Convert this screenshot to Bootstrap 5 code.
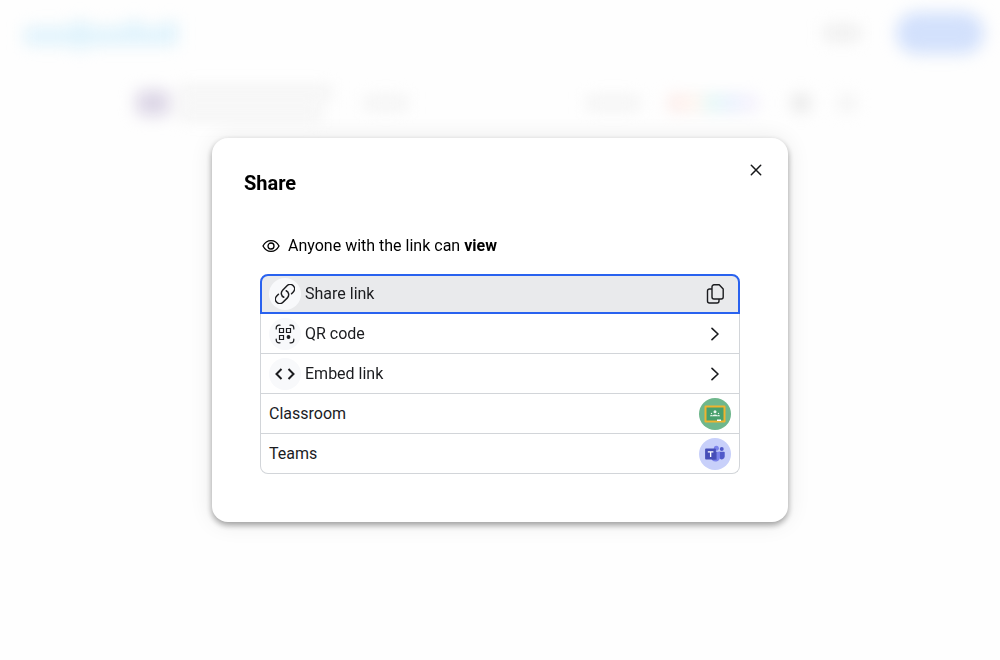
<!DOCTYPE html>
<html lang="en">
<head>
<meta charset="utf-8">
<meta name="viewport" content="width=device-width, initial-scale=1">
<title>Share</title>
<link href="https://cdn.jsdelivr.net/npm/bootstrap@5.3.0/dist/css/bootstrap.min.css" rel="stylesheet">
<style>
  body { font-family: Roboto, "Liberation Sans", sans-serif; font-size: 16px; background: #fefefe; color: #000; }
  svg { display: block; flex: none; }

  /* page behind the dialog, softened */
  .backdrop-page { filter: blur(8px); }
  .site-bar { height: 66px; padding: 0 16px 0 24px; }
  .site-logo { width: 154px; height: 34px; margin-top: 2px; }
  .site-tools { gap: 36px; }
  .login-bar { width: 36px; height: 14px; background: #ededed; }
  .signup-pill { width: 88px; height: 42px; background: #d3e1fc; border-radius: 21px; }
  .doc-bar { max-width: 728px; height: 74px; }
  .doc-tools { gap: 28px; padding-right: 8px; }
  .doc-thumb { width: 34px; height: 26px; background: #dcd6e6; border-radius: 8px; }
  .line-bar { height: 12px; background: #f2f2f2; }
  .dot { width: 18px; height: 18px; border-radius: 50%; }

  .overlay { z-index: 10; }
  .share-dialog { max-width: 576px; padding: 28px 32px 48px; border-radius: 16px; background: #fff;
    box-shadow: 0 3px 6px rgba(0,0,0,.36), 0 1px 24px rgba(0,0,0,.09); }
  .share-title { font-size: 20px; line-height: 34px; font-weight: 700; }
  .close-btn { top: 16px; right: 16px; width: 32px; height: 32px; }
  .share-body { padding: 0 16px; margin-top: 34px; }
  .view-note { line-height: 24px; margin-bottom: 16px; padding-left: 2px; }
  .share-item { height: 40px; padding: 4px 8px 3px; border: 1px solid #d2d5d9; border-top-width: 0;
    background: #fff; color: #1b1c1f; line-height: 24px; text-align: left; }
  .share-item.chosen { padding: 2px 7px; border: 2px solid #2962ef; background: #e9eaec; border-radius: 8px 8px 0 0; }
  .share-item:last-child { border-radius: 0 0 8px 8px; }
  .share-item:focus { outline: 0; }
  .round { width: 32px; height: 32px; border-radius: 50%; background: #f8f9fb; }
  .round-green { background: #6fb78c; }
  .round-teams { background: #c8d0fa; }
  .plain-end { width: 32px; height: 32px; }
</style>
</head>
<body>
<div class="backdrop-page" aria-hidden="true">
  <div class="site-bar d-flex align-items-center justify-content-between">
    <svg class="site-logo" viewBox="0 0 154 34"><path d="M0 10h48V4h16v6h38V4h16v6h20V5h16v23H64v4H48v-4H0z" fill="#e0f3fc"/></svg>
    <div class="site-tools d-flex align-items-center"><div class="login-bar"></div><div class="signup-pill"></div></div>
  </div>
  <div class="doc-bar mx-auto d-flex align-items-center justify-content-between">
    <div class="d-flex align-items-center gap-2">
      <div class="doc-thumb"></div>
      <div class="d-grid gap-2"><div class="line-bar" style="width:154px"></div><div class="line-bar" style="width:144px"></div></div>
      <div class="line-bar ms-4" style="width:44px"></div>
    </div>
    <div class="doc-tools d-flex align-items-center">
      <div class="line-bar" style="width:54px"></div>
      <div class="d-flex">
        <div class="dot" style="background:#fdeae6"></div><div class="dot" style="background:#fdf3ec"></div><div class="dot" style="background:#def6f5"></div>
        <div class="dot" style="background:#e4edfd"></div><div class="dot" style="background:#f1eefd"></div><div style="width:6px"></div>
      </div>
      <div class="dot" style="background:#e4e4e4"></div><div class="dot" style="background:#f3f3f3"></div>
    </div>
  </div>
</div>

<div class="overlay position-fixed top-0 start-0 w-100 h-100 d-flex align-items-center justify-content-center">
  <section class="share-dialog position-relative w-100" role="dialog" aria-modal="true" aria-labelledby="share-title">
    <h1 id="share-title" class="share-title mb-0">Share</h1>
    <button type="button" class="close-btn btn p-0 border-0 position-absolute d-flex align-items-center justify-content-center" aria-label="Close">
      <svg width="12" height="12" viewBox="0 0 12 12" fill="none" stroke="#17181a" stroke-width="1.5" stroke-linecap="round"><path d="M1.300 1.300l9.400 9.400M10.700 1.300l-9.400 9.400"/></svg>
    </button>
    <div class="share-body">
      <p class="view-note d-flex align-items-center gap-2">
        <svg width="18" height="14" viewBox="0 0 18 14" fill="none" stroke="#000" stroke-width="1.3"><path d="M1 7C2.800 3.500 5.600 1.600 9 1.600S15.200 3.500 17 7C15.200 10.500 12.400 12.400 9 12.400S2.800 10.500 1 7z"/><circle cx="9" cy="7" r="3"/></svg>
        <span>Anyone with the link can <strong>view</strong></span>
      </p>
      <div class="d-flex flex-column">
        <button type="button" class="share-item chosen w-100 d-flex align-items-center justify-content-between">
          <span class="d-flex align-items-center gap-1"><span class="round d-flex align-items-center justify-content-center">
            <svg width="20" height="20" viewBox="1.800 1.800 20.400 20.400" fill="none" stroke="#1b1c1f" stroke-width="1.500" stroke-linecap="round" stroke-linejoin="round"><path d="M13.190 8.688a4.500 4.500 0 0 1 1.242 7.244l-4.500 4.500a4.500 4.500 0 0 1-6.364-6.364l1.757-1.757m13.350-.622 1.757-1.757a4.500 4.500 0 0 0-6.364-6.364l-4.500 4.500a4.500 4.500 0 0 0 1.242 7.244"/></svg>
          </span><span>Share link</span></span>
          <span class="plain-end d-flex align-items-center justify-content-center">
            <svg width="18" height="20" viewBox="0 0 18 20" fill="none" stroke="#1b1c1f" stroke-width="1.400" stroke-linejoin="round"><path d="M8 .8h5.200L17.200 5v8a2 2 0 0 1-2 2H8a2 2 0 0 1-2-2V2.800a2 2 0 0 1 2-2z"/><path d="M6 5H3.500a2 2 0 0 0-2 2v10a2 2 0 0 0 2 2h7.500a2 2 0 0 0 2-2v-2"/></svg>
          </span>
        </button>
        <button type="button" class="share-item w-100 d-flex align-items-center justify-content-between">
          <span class="d-flex align-items-center gap-1"><span class="round d-flex align-items-center justify-content-center">
            <svg width="20" height="20" viewBox="0 0 20 20" fill="none" stroke="#1b1c1f" stroke-width="1.200" stroke-linecap="round"><path d="M1.200 5V4a2.800 2.800 0 0 1 2.800-2.800h1M15 1.200h1A2.800 2.800 0 0 1 18.800 4v1M18.800 15v1a2.800 2.800 0 0 1-2.800 2.800h-1M5 18.800H4A2.800 2.800 0 0 1 1.200 16v-1"/><path d="M4.500 4.500h4v4h-4zM11.500 4.500h4v4h-4zM4.500 11.500h4v4h-4z"/><circle cx="13.500" cy="13" r="1.300" fill="#1b1c1f"/></svg>
          </span><span>QR code</span></span>
          <span class="plain-end d-flex align-items-center justify-content-center"><svg width="8" height="14" viewBox="0 0 8 14" fill="none" stroke="#1b1c1f" stroke-width="1.600" stroke-linecap="round" stroke-linejoin="round"><path d="M1 1.300L7 7l-6 5.700"/></svg></span>
        </button>
        <button type="button" class="share-item w-100 d-flex align-items-center justify-content-between">
          <span class="d-flex align-items-center gap-1"><span class="round d-flex align-items-center justify-content-center">
            <svg width="20" height="12" viewBox="0 0 20 12" fill="none" stroke="#1b1c1f" stroke-width="2"><path d="M6.500 1L1.500 6l5 5M13.500 1l5 5-5 5"/></svg>
          </span><span>Embed link</span></span>
          <span class="plain-end d-flex align-items-center justify-content-center"><svg width="8" height="14" viewBox="0 0 8 14" fill="none" stroke="#1b1c1f" stroke-width="1.600" stroke-linecap="round" stroke-linejoin="round"><path d="M1 1.300L7 7l-6 5.700"/></svg></span>
        </button>
        <button type="button" class="share-item w-100 d-flex align-items-center justify-content-between">
          <span>Classroom</span>
          <span class="round round-green d-flex align-items-center justify-content-center">
            <svg width="22" height="18" viewBox="0 0 22 18"><rect x="0.500" y="0.500" width="21" height="17" rx="1.200" fill="#efb32f"/><rect x="2.500" y="2.500" width="17" height="13" fill="#489f6c"/><g fill="#e8f5ec"><circle cx="11" cy="6.800" r="1.500"/><circle cx="7.500" cy="8.500" r=".7"/><circle cx="14.500" cy="8.500" r=".7"/><path d="M6 11.300c.3-1.500 1.700-1.500 2.500-.7 1.200-1.500 3.800-1.500 5 0 .8-.8 2.200-.8 2.500.7z"/></g><path d="M13 14.500h4v1.500h-4z" fill="#fff"/></svg>
          </span>
        </button>
        <button type="button" class="share-item w-100 d-flex align-items-center justify-content-between">
          <span>Teams</span>
          <span class="round round-teams d-flex align-items-center justify-content-center">
            <svg width="20" height="18" viewBox="0 0 22 20"><circle cx="18.500" cy="4.500" r="2.200" fill="#5059c9"/><path d="M15 7.500h6a.8.800 0 0 1 .8.800v4.500a3.200 3.200 0 0 1-6 1.500z" fill="#5059c9"/><circle cx="12.500" cy="3.500" r="2.800" fill="#7b83eb"/><path d="M8 7.500h8.500v6a5 5 0 0 1-9.500 2z" fill="#7b83eb"/><path d="M8 7.500h5v9H7.500z" fill="#5962c5"/><rect x="0" y="4" width="12" height="12" rx="1" fill="#464eb8"/><path d="M3 7h6.200v1.400H6.900v5H5.400v-5H3z" fill="#fff"/></svg>
          </span>
        </button>
      </div>
    </div>
  </section>
</div>
<script src="https://cdn.jsdelivr.net/npm/bootstrap@5.3.0/dist/js/bootstrap.bundle.min.js"></script>
</body>
</html>
